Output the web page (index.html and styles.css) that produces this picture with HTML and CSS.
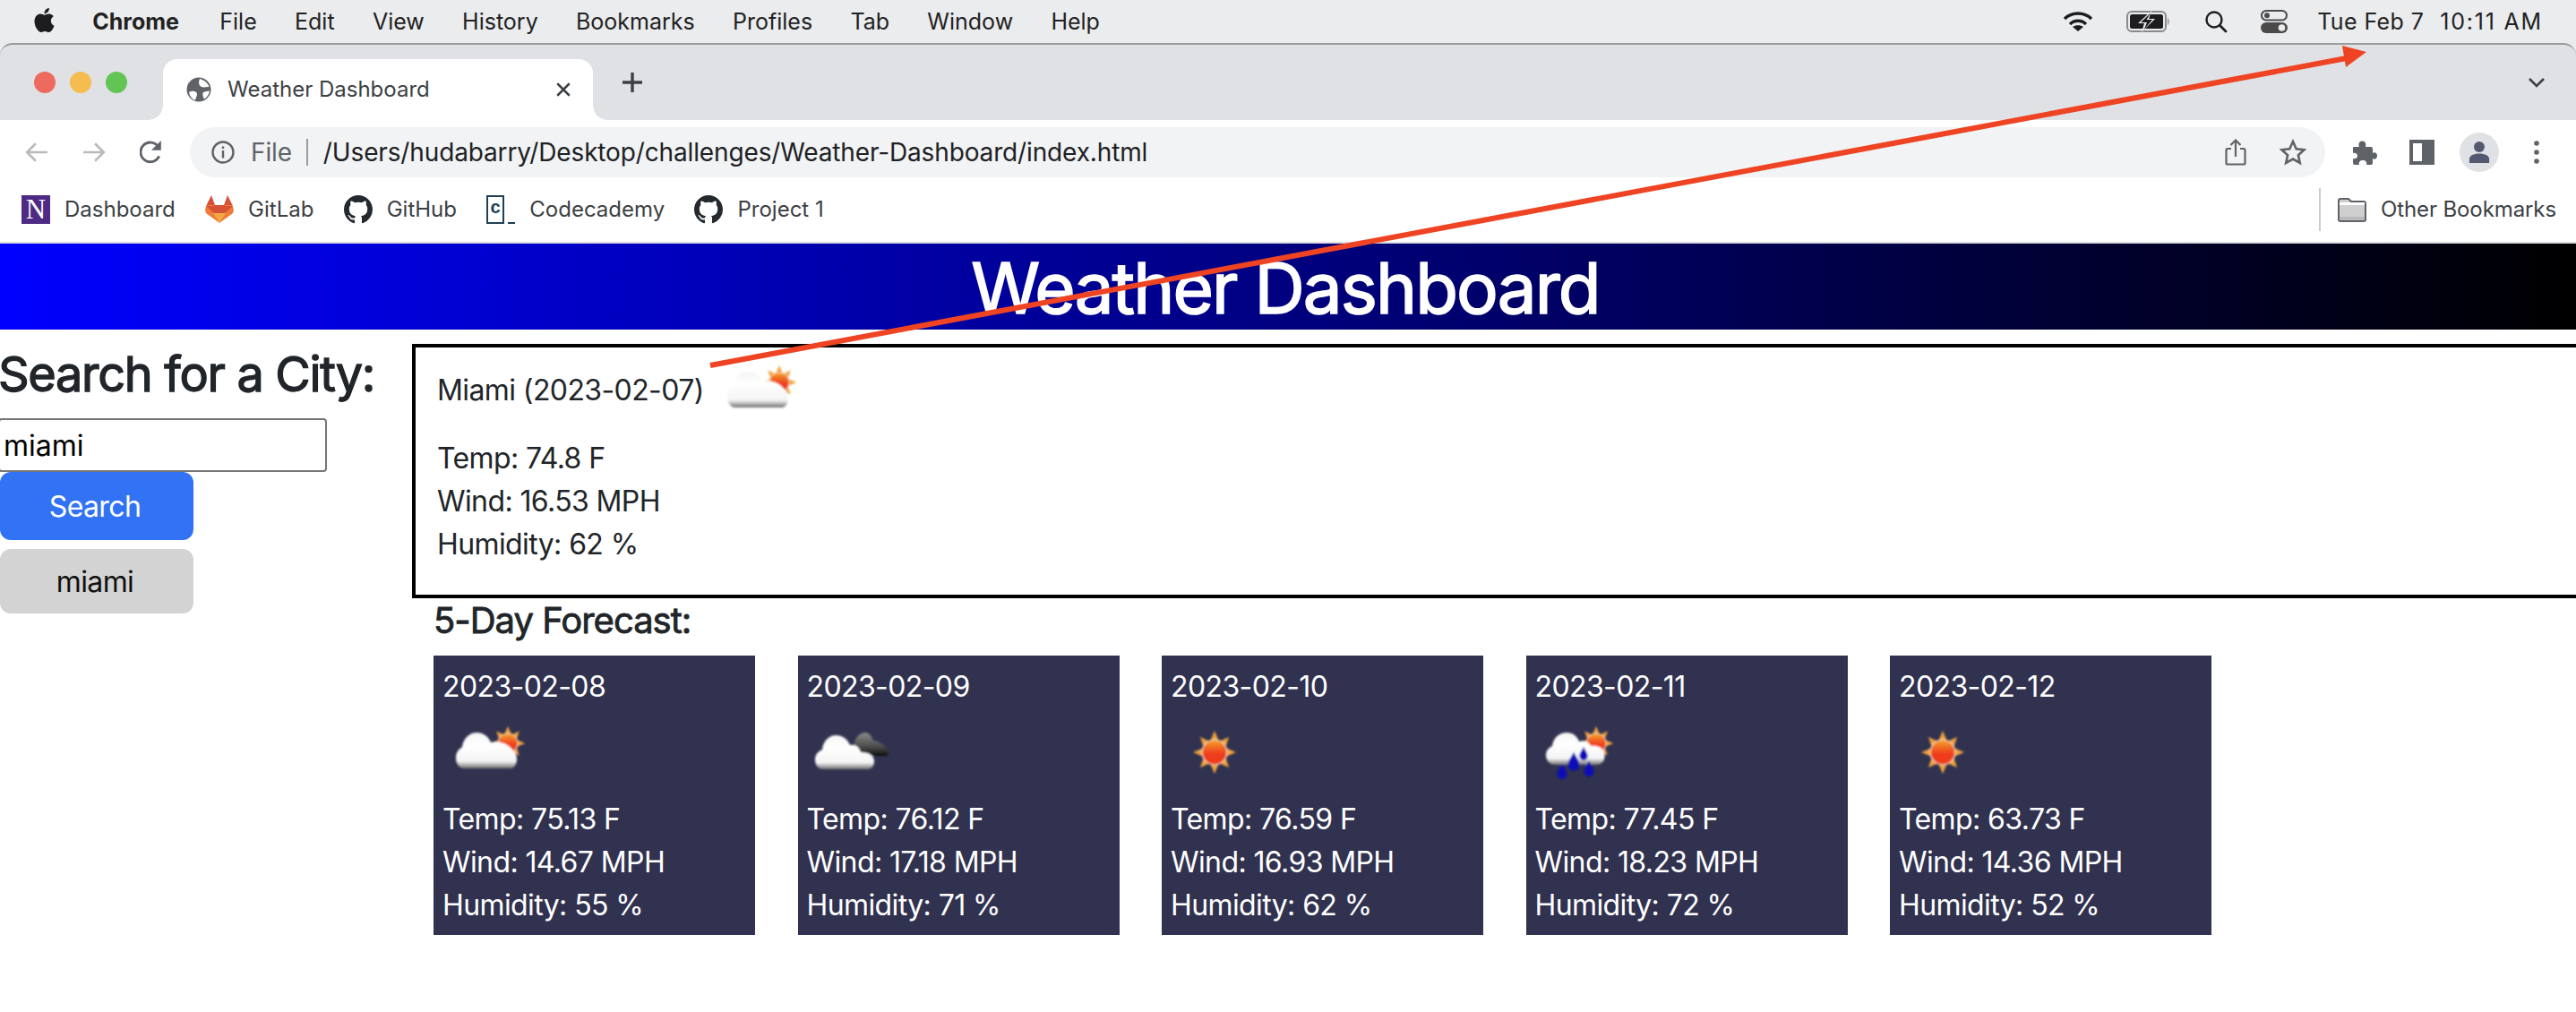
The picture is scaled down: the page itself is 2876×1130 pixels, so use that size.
FILE: index.html
```html
<!DOCTYPE html>
<html lang="en">
<head>
    <meta charset="UTF-8">
    <title>Weather Dashboard</title>
    <link rel="stylesheet" href="styles.css">
</head>
<body>
    <svg class="defs" width="0" height="0">
        <defs>
            <linearGradient id="cloudFill" x1="0" y1="0" x2="0" y2="1">
                <stop offset="0" stop-color="#f4f4f4"/>
                <stop offset=".35" stop-color="#fff"/>
                <stop offset=".8" stop-color="#f4f4f4"/>
                <stop offset="1" stop-color="#6e6e6e"/>
            </linearGradient>
            <linearGradient id="darkFill" x1="0" y1="0" x2="0" y2="1">
                <stop offset="0" stop-color="#8a8a8a"/>
                <stop offset=".6" stop-color="#4c4c4c"/>
                <stop offset="1" stop-color="#111"/>
            </linearGradient>
            <linearGradient id="sunFill" x1="0" y1="0" x2="0" y2="1">
                <stop offset="0" stop-color="#f5a42c"/>
                <stop offset=".55" stop-color="#ee3f1d"/>
                <stop offset="1" stop-color="#ee3a1c"/>
            </linearGradient>
            <filter id="soft" x="-10%" y="-10%" width="120%" height="120%">
                <feGaussianBlur stdDeviation=".9"/>
            </filter>
            <g id="sun">
                <polygon fill="#f2a33a" points="0,-24 5,-12 16,-17 12,-5 24,0 12,5 16,17 5,12 0,24 -5,12 -16,17 -12,5 -24,0 -12,-5 -16,-17 -5,-12"/>
                <circle r="14" fill="url(#sunFill)" stroke="#f5dcc0" stroke-width="1.2"/>
            </g>
            <path id="cloud" fill="url(#cloudFill)" d="M24 67C18 67 15 61 15 55C15 49 18 46 22 43C23 33 31 27 38 27C46 27 51 31 54 38C60 36 72 38 78 46C82 49 83 53 83 57C83 62 80 67 76 67Z"/>
            <path id="drop" fill="#0a10b8" d="M0 -7C2 -3 4 -1 4 2A4 4 0 0 1 -4 2C-4 -1 -2 -3 0 -7Z"/>
            <path id="octocat" fill="#24292f" d="M8 0C3.58 0 0 3.58 0 8c0 3.54 2.29 6.53 5.47 7.59.4.07.55-.17.55-.38 0-.19-.01-.82-.01-1.49-2.01.37-2.53-.49-2.69-.94-.09-.23-.48-.94-.82-1.13-.28-.15-.68-.52-.01-.53.63-.01 1.08.58 1.23.82.72 1.21 1.87.87 2.33.66.07-.52.28-.87.51-1.07-1.78-.2-3.64-.89-3.64-3.95 0-.87.31-1.59.82-2.15-.08-.2-.36-1.02.08-2.12 0 0 .67-.21 2.2.82.64-.18 1.32-.27 2-.27.68 0 1.36.09 2 .27 1.53-1.04 2.2-.82 2.2-.82.44 1.1.16 1.92.08 2.12.51.56.82 1.27.82 2.15 0 3.07-1.87 3.75-3.65 3.95.29.25.54.73.54 1.48 0 1.07-.01 1.93-.01 2.2 0 .21.15.46.55.38A8.013 8.013 0 0016 8c0-4.42-3.58-8-8-8z"/>
            <g id="icon-few">
                <use href="#sun" transform="translate(73 39) scale(.8)"/>
                <use href="#cloud"/>
            </g>
            <g id="icon-broken">
                <path fill="url(#darkFill)" d="M56 53C51 53 50 47 52 43C52 33 60 26 66 27C71 28 73 33 74 36C81 36 87 42 91 47C92 50 90 53 87 53Z"/>
                <path fill="url(#cloudFill)" transform="translate(-6 2)" d="M24 66C18 66 15 61 15 55C15 49 19 46 23 44C24 34 31 28 38 28C46 28 51 32 54 39C60 38 64 41 66 47C74 47 81 50 81 57C81 62 78 66 74 66Z"/>
            </g>
            <g id="icon-clear">
                <use href="#sun" transform="translate(49 49)"/>
            </g>
            <g id="icon-rain">
                <use href="#sun" transform="translate(68 39) scale(.8)"/>
                <path fill="url(#cloudFill)" d="M22 63C16 63 12 58 12 52C12 47 15 44 19 42C20 32 28 27 35 27C42 27 47 31 49 37C54 35 60 37 62 42C68 41 75 43 77 49C78 53 78 58 74 61C72 63 70 63 68 63Z"/>
                <use href="#drop" transform="translate(54 51) scale(1.15)"/>
                <use href="#drop" transform="translate(43 60) scale(1.6)"/>
                <use href="#drop" transform="translate(60 68) scale(1.35)"/>
                <use href="#drop" transform="translate(30 71) scale(1.35)"/>
            </g>
        </defs>
    </svg>

    <!-- mac menu bar -->
    <div class="menubar">
        <svg class="apple" viewBox="0 0 24 24"><path fill="#1d1d1f" d="M12.152 6.896c-.948 0-2.415-1.078-3.96-1.04-2.04.027-3.91 1.183-4.961 3.014-2.117 3.675-.546 9.103 1.519 12.09 1.013 1.454 2.208 3.09 3.792 3.039 1.52-.065 2.09-.987 3.935-.987 1.831 0 2.35.987 3.96.948 1.637-.026 2.676-1.48 3.676-2.948 1.156-1.688 1.636-3.325 1.662-3.415-.039-.013-3.182-1.221-3.22-4.857-.026-3.04 2.48-4.494 2.597-4.559-1.429-2.09-3.623-2.324-4.39-2.376-2-.156-3.675 1.09-4.61 1.09zM15.53 3.83c.843-1.012 1.4-2.427 1.245-3.83-1.207.052-2.662.805-3.532 1.818-.78.896-1.454 2.338-1.273 3.714 1.338.104 2.715-.688 3.559-1.701"/></svg>
        <span class="menu-app">Chrome</span>
        <span>File</span>
        <span>Edit</span>
        <span>View</span>
        <span>History</span>
        <span>Bookmarks</span>
        <span>Profiles</span>
        <span>Tab</span>
        <span>Window</span>
        <span>Help</span>
        <div class="status">
            <svg class="st-wifi" viewBox="0 0 34 24"><path fill="none" stroke="#1d1d1f" stroke-width="3.4" d="M2 9C10 1 24 1 32 9M8 15C13 10 21 10 26 15"/><path fill="#1d1d1f" d="M17 23L11 18C14 15.500 20 15.500 23 18Z"/></svg>
            <svg class="st-battery" viewBox="0 0 50 24"><rect x="1" y="1" width="43" height="22" rx="5" fill="none" stroke="#8a8a8a" stroke-width="2"/><rect x="4" y="4" width="37" height="16" rx="2.500" fill="#1d1d1f"/><path fill="#ebecee" d="M28 0L13 14H20L17 24L32 9H25Z"/><path fill="#1d1d1f" d="M27 2.500L16 13H23L19.500 21.500L29 10H22.500Z"/><path fill="#8a8a8a" d="M46 8C48 9 48 15 46 16Z"/></svg>
            <svg class="st-search" viewBox="0 0 26 26"><circle cx="11" cy="11" r="8.500" fill="none" stroke="#1d1d1f" stroke-width="2.400"/><path stroke="#1d1d1f" stroke-width="2.800" stroke-linecap="round" d="M17.500 17.500L24 24"/></svg>
            <svg class="st-toggle" viewBox="0 0 30 26"><rect x="1" y="1" width="28" height="10.500" rx="5.200" fill="none" stroke="#4a4a4a" stroke-width="2"/><circle cx="7" cy="6.200" r="3" fill="#4a4a4a"/><rect y="14" width="30" height="12" rx="6" fill="#4a4a4a"/><circle cx="23.500" cy="20" r="3.800" fill="#ebecee"/></svg>
            <span class="st-date">Tue Feb 7</span>
            <span class="st-time">10:11 AM</span>
        </div>
    </div>

    <!-- browser chrome -->
    <div class="window-top">
        <div class="tabstrip">
            <div class="lights">
                <i class="light red"></i>
                <i class="light yellow"></i>
                <i class="light green"></i>
            </div>
            <div class="tab">
                <svg class="globe" viewBox="0 0 28 28"><circle cx="14" cy="14" r="13.500" fill="#5f6368"/><path fill="#fff" d="M15 2C19 3 24 6 25.500 11C22 10.500 19.500 12.500 16 10.500C14 9 13.500 5 15 2ZM3 17C6 15 9 15.500 11 17C13 19 11.500 21 11 23C10.500 25 9.500 26 8.500 25.500C5.500 23.500 3.500 20.500 3 17ZM19 17C21 16 24 16 26 15.500C25.500 19 23 23 20 24.500C18.500 22 17.500 19 19 17Z"/></svg>
                <span class="tab-title">Weather Dashboard</span>
                <svg class="tab-close" viewBox="0 0 16 16"><path stroke="#3c4043" stroke-width="2.200" d="M2 2L14 14M14 2L2 14"/></svg>
            </div>
            <svg class="new-tab" viewBox="0 0 24 24"><path stroke="#3c4043" stroke-width="3.400" d="M12 1V23M1 12H23"/></svg>
            <svg class="tab-list" viewBox="0 0 20 12"><path fill="none" stroke="#3c4043" stroke-width="2.600" d="M2 2L10 10L18 2"/></svg>
        </div>
    </div>

    <div class="toolbar">
        <svg class="nav" viewBox="0 0 24 24"><path fill="none" stroke="#b8babd" stroke-width="2.400" d="M23 12H2M11 3L2 12L11 21"/></svg>
        <svg class="nav" viewBox="0 0 24 24"><path fill="none" stroke="#b8babd" stroke-width="2.400" d="M1 12H22M13 3L22 12L13 21"/></svg>
        <svg class="nav" viewBox="0 0 24 24"><path fill="none" stroke="#5f6368" stroke-width="2.600" d="M20 16A10 10 0 1 1 19 6"/><path fill="#5f6368" d="M22 0V10H12Z"/></svg>
        <div class="address">
            <svg class="info" viewBox="0 0 26 26"><circle cx="13" cy="13" r="11.500" fill="none" stroke="#5f6368" stroke-width="2.400"/><path fill="#5f6368" d="M11.800 11H14.200V19.500H11.800ZM11.800 6.500H14.200V9H11.800Z"/></svg>
            <span class="addr-file">File</span>
            <i class="addr-sep"></i>
            <span class="addr-url">/Users/hudabarry/Desktop/challenges/Weather-Dashboard/index.html</span>
            <svg class="share" viewBox="0 0 24 30"><path fill="none" stroke="#5f6368" stroke-width="2.200" d="M7 11H3A1.500 1.500 0 0 0 1.500 12.500V27A1.500 1.500 0 0 0 3 28.500H21A1.500 1.500 0 0 0 22.500 27V12.500A1.500 1.500 0 0 0 21 11H17M12 20V2M6.500 7L12 1.500L17.500 7"/></svg>
            <svg class="star" viewBox="0 0 30 30"><path fill="none" stroke="#5f6368" stroke-width="2.600" d="M15 3L18.700 11.300L27.500 12.200L20.900 18.200L22.800 27L15 22.500L7.200 27L9.100 18.200L2.500 12.200L11.300 11.300Z"/></svg>
        </div>
        <div class="tools">
            <div class="tool"><svg class="puzzle" viewBox="0 0 30 30"><path fill="#5f6368" d="M3 9H9C8 7 8 3 12 2.500C16 2 17 6 16 9H22A2 2 0 0 1 24 11V16C26 14.500 29 15.500 29 19C29 22.500 26 23.500 24 22V27A2 2 0 0 1 22 29H17C18 26 16 24 13 24C10 24 8 26 9 29H4A2 2 0 0 1 2 27V22C5 23 7 21 7 19C7 17 5 15 2 16V10A1 1 0 0 1 3 9Z"/></svg></div>
            <div class="tool"><i class="sidepanel"></i></div>
            <div class="tool"><div class="avatar"><svg viewBox="0 0 26 28"><circle cx="13" cy="7.500" r="6.500" fill="#535a70"/><path fill="#535a70" d="M1 27V22C1 18 6 15.500 13 15.500C20 15.500 25 18 25 22V27Z"/></svg></div></div>
            <div class="tool"><svg class="dots" viewBox="0 0 6 26"><circle cx="3" cy="3" r="2.800" fill="#5f6368"/><circle cx="3" cy="13" r="2.800" fill="#5f6368"/><circle cx="3" cy="23" r="2.800" fill="#5f6368"/></svg></div>
        </div>
    </div>

    <div class="bookmarks">
        <div class="bm bm-first"><span class="bm-n">N</span>Dashboard</div>
        <div class="bm">
            <svg class="bm-icon" viewBox="0 0 32 32">
                <polygon fill="#d65136" points="7,0 11,11 1.500,11"/>
                <polygon fill="#d65136" points="25,0 21,11 30.500,11"/>
                <polygon fill="#ef7b3a" points="1.500,11 11,11 16,31 1,20 0,16"/>
                <polygon fill="#ef7b3a" points="30.500,11 21,11 16,31 31,20 32,16"/>
                <polygon fill="#d65136" points="1,12 31,12 22,20 10,20"/>
                <polygon fill="#d65136" points="10,11 22,11 22,20 10,20"/>
                <polygon fill="#f2a944" points="9,20 23,20 16,31"/>
            </svg>
            GitLab
        </div>
        <div class="bm"><svg class="bm-icon" viewBox="0 0 16 16"><use href="#octocat"/></svg>GitHub</div>
        <div class="bm"><span class="bm-c"><b>c</b><i></i></span>Codecademy</div>
        <div class="bm"><svg class="bm-icon" viewBox="0 0 16 16"><use href="#octocat"/></svg>Project 1</div>
        <div class="bm-other">
            <svg class="bm-icon" viewBox="0 0 32 28"><path fill="#cfcfcf" stroke="#5f6368" stroke-width="2" d="M1 4A2 2 0 0 1 3 2H12L15 5H29A2 2 0 0 1 31 7V25A2 2 0 0 1 29 27H3A2 2 0 0 1 1 25Z"/><path fill="#fff" d="M2 6H30V9H2Z"/><path fill="#b9b9b9" d="M2 22H30V26H2Z"/></svg>
            Other Bookmarks
        </div>
    </div>

    <!-- the page itself -->
    <header class="banner">
        <h1>Weather Dashboard</h1>
    </header>

    <main class="content">
        <aside class="search">
            <h2>Search for a City:</h2>
            <input class="city-input" type="text" value="miami">
            <button class="btn btn-search">Search</button>
            <button class="btn btn-history">miami</button>
        </aside>
        <section>
            <div class="today">
                <div class="today-head">
                    <span>Miami (2023-02-07)</span>
                    <svg class="wicon" viewBox="0 0 100 100"><use href="#icon-few" filter="url(#soft)"/></svg>
                </div>
                <p>Temp: 74.8 F</p>
                <p>Wind: 16.53 MPH</p>
                <p>Humidity: 62 %</p>
            </div>
            <h4>5-Day Forecast:</h4>
            <div class="cards">
                <div class="card">
                    <p>2023-02-08</p>
                    <svg class="wicon" viewBox="0 0 100 100"><use href="#icon-few" filter="url(#soft)"/></svg>
                    <p>Temp: 75.13 F</p>
                    <p>Wind: 14.67 MPH</p>
                    <p>Humidity: 55 %</p>
                </div>
                <div class="card">
                    <p>2023-02-09</p>
                    <svg class="wicon" viewBox="0 0 100 100"><use href="#icon-broken" filter="url(#soft)"/></svg>
                    <p>Temp: 76.12 F</p>
                    <p>Wind: 17.18 MPH</p>
                    <p>Humidity: 71 %</p>
                </div>
                <div class="card">
                    <p>2023-02-10</p>
                    <svg class="wicon" viewBox="0 0 100 100"><use href="#icon-clear" filter="url(#soft)"/></svg>
                    <p>Temp: 76.59 F</p>
                    <p>Wind: 16.93 MPH</p>
                    <p>Humidity: 62 %</p>
                </div>
                <div class="card">
                    <p>2023-02-11</p>
                    <svg class="wicon" viewBox="0 0 100 100"><use href="#icon-rain" filter="url(#soft)"/></svg>
                    <p>Temp: 77.45 F</p>
                    <p>Wind: 18.23 MPH</p>
                    <p>Humidity: 72 %</p>
                </div>
                <div class="card">
                    <p>2023-02-12</p>
                    <svg class="wicon" viewBox="0 0 100 100"><use href="#icon-clear" filter="url(#soft)"/></svg>
                    <p>Temp: 63.73 F</p>
                    <p>Wind: 14.36 MPH</p>
                    <p>Humidity: 52 %</p>
                </div>
            </div>
        </section>
    </main>

    <!-- red annotation arrow drawn over the screenshot -->
    <svg class="annotation" viewBox="0 0 2876 1130">
        <path stroke="#ee4423" stroke-width="6" d="M793 408L2625 64"/>
        <polygon fill="#ee4423" points="2642,58 2615,51 2619,75"/>
    </svg>
</body>
</html>
```

FILE: styles.css
```css
* {
    margin: 0;
    padding: 0;
    box-sizing: border-box;
}

html, body {
    height: 100%;
    overflow: hidden;
}

body {
    position: relative;
    background: #ffffff;
    color: #212529;
    font-family: Inter, "Liberation Sans", sans-serif;
    font-size: 32px;
    line-height: 48px;
}

.defs {
    display: block;
    height: 0;
}

/* mac menu bar */
.menubar {
    display: flex;
    align-items: center;
    gap: 42.3px;
    height: 48px;
    padding-left: 36px;
    background: #ebecee;
    color: #222222;
    font-size: 25px;
    line-height: 48px;
}

.apple {
    width: 27px;
    height: 31px;
    margin-right: -2px;
    margin-top: -4px;
}

.menu-app {
    margin-right: 3px;
    font-weight: 700;
}

.status {
    display: flex;
    align-items: center;
    margin-left: auto;
    padding-right: 37px;
}

.st-wifi {
    width: 34px;
    height: 24px;
    margin-right: 37px;
}

.st-battery {
    width: 50px;
    height: 24px;
    margin-right: 37px;
}

.st-search {
    width: 26px;
    height: 26px;
    margin-right: 37px;
}

.st-toggle {
    width: 30px;
    height: 26px;
    margin-right: 33px;
}

.st-date {
    margin-right: 18px;
    letter-spacing: 0.4px;
}

.st-time {
    letter-spacing: 1.8px;
}

/* tabs */
.window-top {
    background: #ebecee;
}

.tabstrip {
    display: flex;
    align-items: center;
    height: 86px;
    background: #dfe1e5;
    border-top: 2px solid #9c9c9c;
    border-radius: 14px 14px 0 0;
}

.lights {
    display: flex;
    gap: 16px;
    margin-left: 38px;
}

.light {
    display: block;
    width: 24px;
    height: 24px;
    border-radius: 50%;
}

.red {
    background: #ee6a5f;
}

.yellow {
    background: #f5bd4f;
}

.green {
    background: #61c454;
}

.tab {
    position: relative;
    display: flex;
    align-items: center;
    align-self: flex-end;
    width: 480px;
    height: 68px;
    margin-left: 40px;
    padding: 0 24px 0 26px;
    background: #ffffff;
    border-radius: 16px 16px 0 0;
    color: #3c4043;
    font-size: 24px;
    line-height: 40px;
}

.tab::before,
.tab::after {
    content: "";
    position: absolute;
    bottom: 0;
    width: 16px;
    height: 16px;
}

.tab::before {
    left: -16px;
    background: radial-gradient(circle at 0 0, transparent 15.5px, #ffffff 16px);
}

.tab::after {
    right: -16px;
    background: radial-gradient(circle at 100% 0, transparent 15.5px, #ffffff 16px);
}

.globe {
    width: 28px;
    height: 28px;
}

.tab-title {
    margin-left: 18px;
}

.tab-close {
    width: 18px;
    height: 18px;
    margin-left: auto;
}

.new-tab {
    width: 24px;
    height: 24px;
    margin-left: 32px;
}

.tab-list {
    width: 20px;
    height: 12px;
    margin-left: auto;
    margin-right: 34px;
}

/* toolbar */
.toolbar {
    display: flex;
    align-items: center;
    gap: 38px;
    height: 64px;
    padding-top: 8px;
    padding-left: 28px;
}

.nav {
    width: 26px;
    height: 26px;
}

.address {
    display: flex;
    align-items: center;
    flex: 1;
    height: 56px;
    margin-left: -8px;
    padding: 0 24px;
    background: #f1f3f4;
    border-radius: 28px;
    font-size: 28px;
    letter-spacing: -0.14px;
    color: #202124;
}

.info {
    width: 26px;
    height: 26px;
}

.addr-file {
    margin-left: 18px;
    color: #5f6368;
}

.addr-sep {
    display: block;
    width: 2px;
    height: 30px;
    margin: 0 17px 0 16px;
    background: #9a9ca0;
}

.share {
    width: 24px;
    height: 30px;
    margin-left: auto;
}

.star {
    width: 30px;
    height: 30px;
    margin-left: 37px;
    margin-right: -3px;
}

.tools {
    display: flex;
    margin-left: -26px;
    padding-right: 12px;
}

.tool {
    display: flex;
    align-items: center;
    justify-content: center;
    width: 64px;
}

.puzzle {
    width: 30px;
    height: 30px;
}

.sidepanel {
    display: block;
    width: 28px;
    height: 28px;
    border: solid #5f6368;
    border-width: 4px 14px 4px 4px;
}

.avatar {
    display: flex;
    align-items: center;
    justify-content: center;
    width: 44px;
    height: 44px;
    border-radius: 50%;
    background: #dfe1e5;
}

.avatar svg {
    width: 24px;
    height: 26px;
}

.dots {
    width: 6px;
    height: 26px;
}

/* bookmarks bar */
.bookmarks {
    display: flex;
    align-items: center;
    gap: 33.3px;
    height: 74px;
    padding: 0 22px 0 24px;
    border-bottom: 2px solid #dadce0;
    color: #3c4043;
    font-size: 24px;
}

.bm {
    display: flex;
    align-items: center;
    gap: 16px;
}

.bm-icon {
    width: 32px;
    height: 32px;
}

.bm-n {
    display: block;
    width: 32px;
    height: 32px;
    background: #4e2a84;
    color: #ffffff;
    font-family: "Liberation Serif", serif;
    font-size: 31px;
    line-height: 32px;
    text-align: center;
}

.bm-c {
    position: relative;
    display: block;
    width: 32px;
    height: 32px;
    font-family: "Liberation Mono", monospace;
    line-height: 24px;
}

.bm-c b {
    display: block;
    width: 20px;
    height: 32px;
    border: 2px solid #1f4056;
    color: #1f4056;
    font-size: 20px;
    line-height: 26px;
    text-align: center;
}

.bm-c i {
    position: absolute;
    right: 0;
    bottom: 0;
    width: 8px;
    height: 2px;
    background: #1f4056;
}

.bm-other {
    display: flex;
    align-items: center;
    gap: 16px;
    margin-left: auto;
    padding-left: 19px;
    border-left: 2px solid #c9cbce;
    letter-spacing: -0.1px;
}

/* page */
.banner {
    height: 96px;
    background: linear-gradient(to right, #0000ff, #000000);
    color: #ffffff;
    text-align: center;
}

/* Inter only comes in regular and bold here, the stroke gives the medium weight */
.banner h1 {
    padding-right: 6px;
    font-size: 78px;
    font-weight: 400;
    line-height: 100px;
    letter-spacing: -1.9px;
    -webkit-text-stroke: 1.6px currentColor;
}

.content {
    display: grid;
    grid-template-columns: 460px 2600px;
    padding-top: 16px;
    letter-spacing: -0.6px;
}

.search h2 {
    margin-left: -2px;
    margin-bottom: 16px;
    font-size: 54px;
    font-weight: 400;
    line-height: 67px;
    letter-spacing: -1.3px;
    -webkit-text-stroke: 1.3px currentColor;
}

.city-input {
    display: block;
    width: 367px;
    height: 60px;
    margin-left: -2px;
    padding-left: 4px;
    border: 2px solid #767676;
    border-radius: 4px;
    color: #000000;
    font-family: inherit;
    font-size: 32px;
}

.btn {
    display: block;
    width: 216px;
    padding-right: 4px;
    border: 0;
    border-radius: 12px;
    font-family: inherit;
    font-size: 32px;
    letter-spacing: inherit;
}

.btn-search {
    height: 76px;
    background: #3273f6;
    color: #ffffff;
}

.btn-history {
    height: 72px;
    margin-top: 10px;
    background: #d3d3d3;
    color: #111111;
}

.today {
    height: 284px;
    padding-left: 24px;
    border: 4px solid #000000;
}

.today-head {
    display: flex;
    align-items: center;
    gap: 11px;
    height: 100px;
}

.today-head span {
    margin-top: -4px;
}

.wicon {
    display: block;
    width: 100px;
    height: 100px;
}

h4 {
    margin: 1px 0 15px 24px;
    font-size: 40px;
    font-weight: 400;
    line-height: 48px;
    letter-spacing: -1px;
    -webkit-text-stroke: 0.8px currentColor;
}

.cards {
    display: flex;
    gap: 47.5px;
    margin-left: 24px;
}

.card {
    width: 359px;
    height: 312px;
    padding: 11px 10px;
    background: #313250;
    color: #ffffff;
}

.annotation {
    position: absolute;
    top: 0;
    left: 0;
    width: 2876px;
    height: 1130px;
    pointer-events: none;
}
```
